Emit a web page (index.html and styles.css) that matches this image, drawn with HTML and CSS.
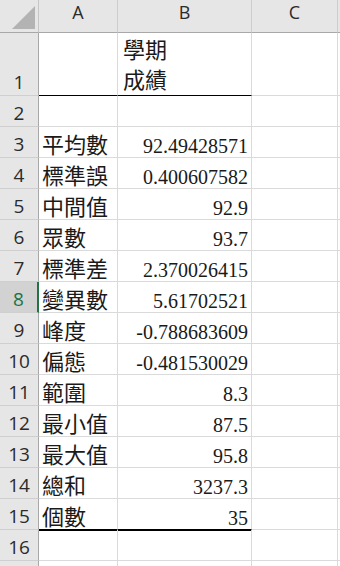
FILE: index.html
```html
<!DOCTYPE html>
<html lang="zh-Hant">
<head>
<meta charset="utf-8">
<title>Sheet</title>
<link rel="stylesheet" href="styles.css">
</head>
<body>
<div class="sheet">
  <div class="corner"><svg width="38" height="32" viewBox="0 0 38 32"><polygon points="12,29 35,29 35,6" fill="#b3b3b3"/></svg></div>
  <div class="ch">A</div><div class="ch">B</div><div class="ch">C</div><div class="ch edge"></div>

  <div class="rh">1</div><div class="c zh top">&nbsp;</div><div class="c zh top title">學期<br>成績</div><div class="c"></div><div class="c edge"></div>
  <div class="rh">2</div><div class="c"></div><div class="c"></div><div class="c"></div><div class="c edge"></div>
  <div class="rh">3</div><div class="c zh">平均數</div><div class="c num">92.49428571</div><div class="c"></div><div class="c edge"></div>
  <div class="rh">4</div><div class="c zh">標準誤</div><div class="c num">0.400607582</div><div class="c"></div><div class="c edge"></div>
  <div class="rh">5</div><div class="c zh">中間值</div><div class="c num">92.9</div><div class="c"></div><div class="c edge"></div>
  <div class="rh">6</div><div class="c zh">眾數</div><div class="c num">93.7</div><div class="c"></div><div class="c edge"></div>
  <div class="rh">7</div><div class="c zh">標準差</div><div class="c num">2.370026415</div><div class="c"></div><div class="c edge"></div>
  <div class="rh sel">8</div><div class="c zh">變異數</div><div class="c num">5.61702521</div><div class="c"></div><div class="c edge"></div>
  <div class="rh">9</div><div class="c zh">峰度</div><div class="c num">-0.788683609</div><div class="c"></div><div class="c edge"></div>
  <div class="rh">10</div><div class="c zh">偏態</div><div class="c num">-0.481530029</div><div class="c"></div><div class="c edge"></div>
  <div class="rh">11</div><div class="c zh">範圍</div><div class="c num">8.3</div><div class="c"></div><div class="c edge"></div>
  <div class="rh">12</div><div class="c zh">最小值</div><div class="c num">87.5</div><div class="c"></div><div class="c edge"></div>
  <div class="rh">13</div><div class="c zh">最大值</div><div class="c num">95.8</div><div class="c"></div><div class="c edge"></div>
  <div class="rh">14</div><div class="c zh">總和</div><div class="c num">3237.3</div><div class="c"></div><div class="c edge"></div>
  <div class="rh">15</div><div class="c zh total">個數</div><div class="c num total">35</div><div class="c"></div><div class="c edge"></div>
  <div class="rh">16</div><div class="c"></div><div class="c"></div><div class="c"></div><div class="c edge"></div>
  <div class="rh"></div><div class="c"></div><div class="c"></div><div class="c"></div><div class="c edge"></div>
</div>
</body>
</html>
```

FILE: styles.css
```css
* { box-sizing: border-box; }
html, body { margin: 0; padding: 0; background: #fff; overflow: hidden; }
body { width: 340px; height: 566px; }

.sheet {
  display: grid;
  grid-template-columns: 39px 79px 134px 86px 2px;
  grid-template-rows: 33px 63px repeat(15, 31px) 6px;
  width: 340px;
  height: 566px;
  overflow: hidden;
}

.corner {
  background: #e6e6e6;
  border-right: 1px solid #c6c6c6;
  border-bottom: 1px solid #a8a8a8;
}
.corner svg { display: block; }

.ch {
  background: #e6e6e6;
  border-right: 1px solid #cdcdcd;
  border-bottom: 1px solid #a8a8a8;
  display: flex;
  justify-content: center;
  align-items: flex-start;
  padding-top: 2px;
  font-family: "Open Sans", "Noto Sans", sans-serif;
  font-size: 18px;
  line-height: 20px;
  color: #2b2b2b;
}
.ch.edge { border-right: none; }

.rh {
  background: #e6e6e6;
  border-right: 1px solid #a8a8a8;
  border-bottom: 1px solid #cfcfcf;
  display: flex;
  justify-content: center;
  align-items: flex-end;
  padding-bottom: 3px;
  font-family: "Open Sans", "Noto Sans", sans-serif;
  font-size: 19px;
  line-height: 20px;
  color: #2b2b2b;
}
.rh.sel {
  background: #d2d2d2;
  color: #217346;
  border-right: 2px solid #217346;
}

.c {
  border-right: 1px solid #dadada;
  border-bottom: 1px solid #dadada;
  display: flex;
  align-items: flex-end;
  color: #1a1a1a;
  white-space: nowrap;
}
.c.edge { border-right: none; }

.zh {
  font-family: "Noto Sans CJK TC", "Noto Sans CJK SC", sans-serif;
  font-size: 22px;
  line-height: 22px;
  padding-left: 3px;
  padding-bottom: 3px;
}

.num {
  justify-content: flex-end;
  font-family: "Liberation Serif", "Times New Roman", serif;
  font-size: 20px;
  line-height: 22px;
  padding-right: 3px;
}

.title {
  white-space: normal;
  line-height: 30px;
  padding-left: 5px;
  padding-bottom: 2px;
}

.top { border-bottom-color: #000; }
.total {
  border-bottom-color: #000;
  box-shadow: 0 1px 0 #000;
}
```
